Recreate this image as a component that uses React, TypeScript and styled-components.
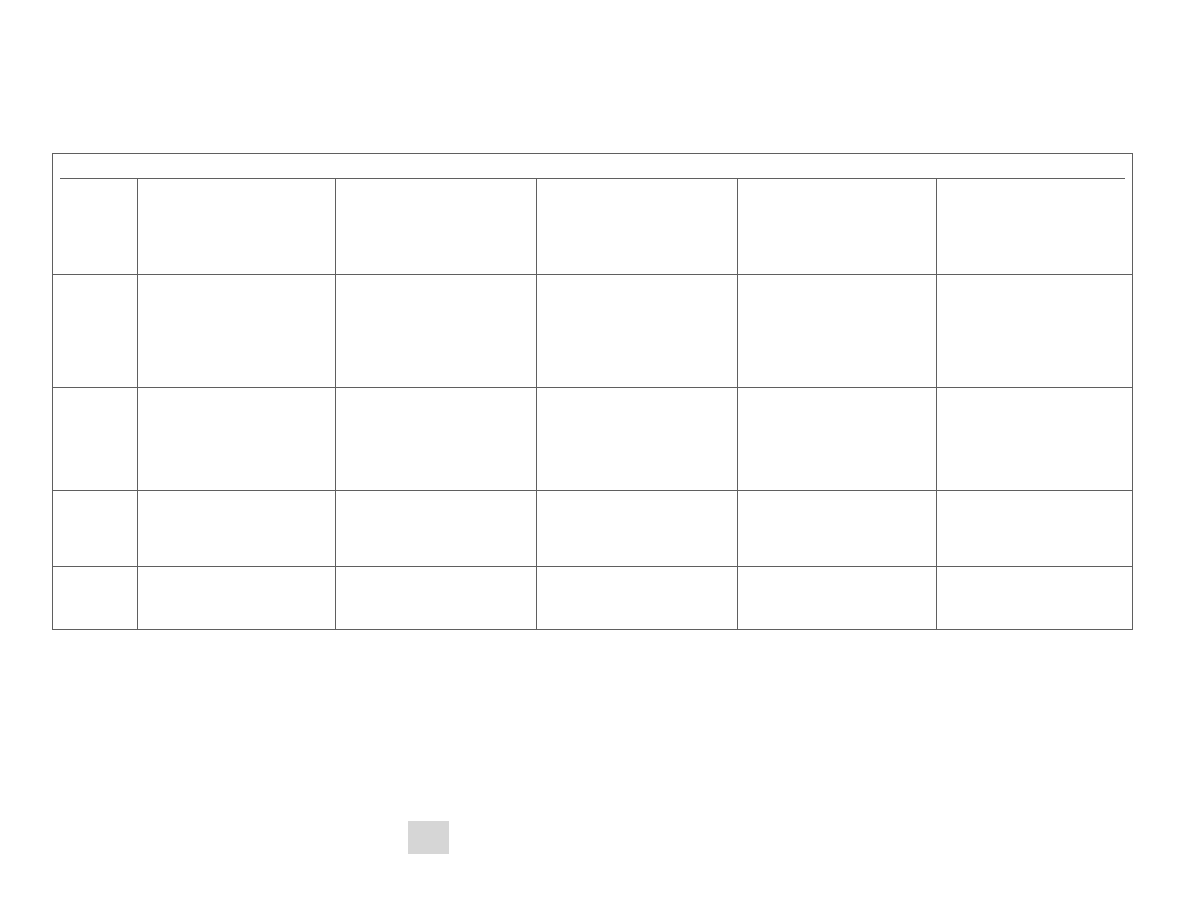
import React from 'react';
import styled, { createGlobalStyle } from 'styled-components';

const GlobalStyle = createGlobalStyle`
  body {
    margin: 0;
    background: #ffffff;
    font-family: "Liberation Sans", Arial, sans-serif;
  }
`;

const rowHeights = [95, 113, 103, 76, 63];
const colWidths = [84, 198, 201, 201, 199, 196];
const line = '#5f5f5f';

const App = () => {
  return (
    <>
      <GlobalStyle />
      <Page>
        <Frame>
          <Caption />
          <Grid>
            {rowHeights.map((h, r) => (
              <Row key={r} $height={h} $first={r === 0}>
                {colWidths.map((w, c) => (
                  <Cell key={c} $first={c === 0} />
                ))}
              </Row>
            ))}
          </Grid>
        </Frame>
        <Footer>
          <PageButton />
        </Footer>
      </Page>
    </>
  );
};

export default App;

const Page = styled.div`
  padding: 153px 0 0 52px;
`;

const Frame = styled.div`
  width: 1081px;
  box-sizing: border-box;
  border: 1px solid ${line};
  background: #ffffff;
`;

const Caption = styled.div`
  height: 24px;
  margin: 0 7px;
  border-bottom: 1px solid ${line};
`;

const Grid = styled.div`
  display: flex;
  flex-direction: column;
`;

const Row = styled.div<{ $height: number; $first: boolean }>`
  display: grid;
  grid-template-columns: ${colWidths.map((w) => `${w}px`).join(' ')};
  height: ${(p) => p.$height}px;
  box-sizing: border-box;
  border-top: ${(p) => (p.$first ? 'none' : `1px solid ${line}`)};
`;

const Cell = styled.div<{ $first: boolean }>`
  box-sizing: border-box;
  border-left: ${(p) => (p.$first ? 'none' : `1px solid ${line}`)};
`;

const Footer = styled.div`
  display: flex;
  margin-top: 191px;
  padding-left: 356px;
`;

const PageButton = styled.div`
  width: 41px;
  height: 33px;
  background: #d6d6d6;
`;
